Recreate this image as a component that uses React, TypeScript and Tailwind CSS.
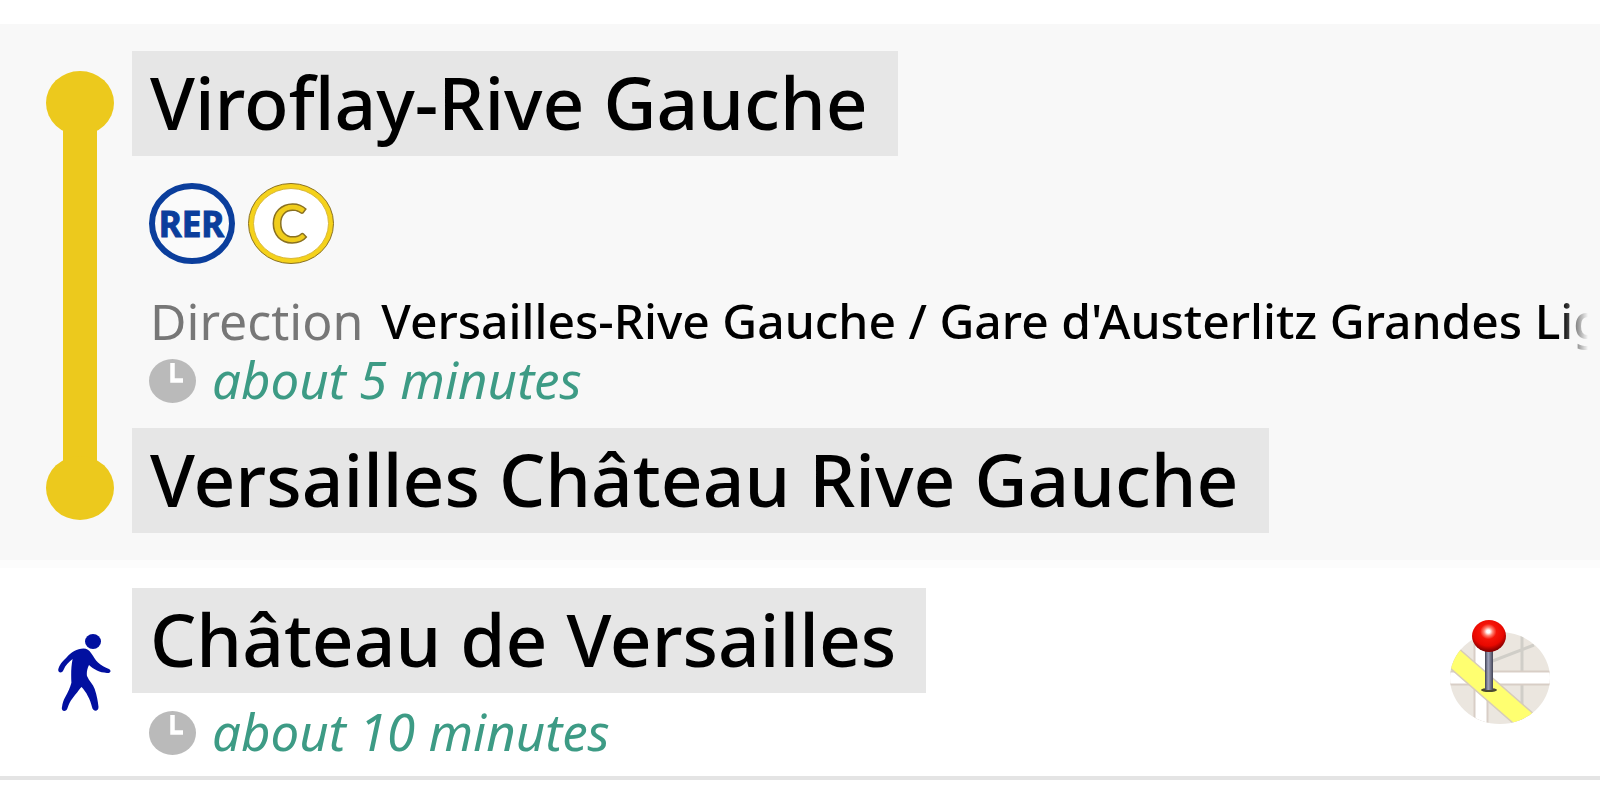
import type { ReactNode } from "react";

interface Leg { station: string; minutes: number; }

const ride: Leg & { direction: string; arrival: string } = {
  station: "Viroflay-Rive Gauche",
  direction: "Versailles-Rive Gauche / Gare d'Austerlitz Grandes Lignes",
  minutes: 5,
  arrival: "Versailles Château Rive Gauche",
};
const walk: Leg = { station: "Château de Versailles", minutes: 10 };

function StationName({ children }: { children: ReactNode }) {
  return <h2 className="w-fit whitespace-nowrap bg-[#e6e6e6] pb-1 pl-[18px] pr-[30px] text-[73px] leading-[101px] font-medium text-black">{children}</h2>;
}

function Duration({ minutes }: { minutes: number }) {
  return (
    <p className="flex items-center gap-4 pl-[17px] text-[51px] leading-[56px] italic text-[#3d9b85]">
      <svg viewBox="0 0 47 44" className="w-[47px] h-11 shrink-0" aria-hidden="true">
        <ellipse cx="23.5" cy="22" rx="23.5" ry="22" fill="#bababa" />
        <path d="M23.5 4V21.5H34" fill="none" stroke="#fff" strokeWidth="4.5" />
      </svg>
      <span className="pb-1">about {minutes} minutes</span>
    </p>
  );
}

function RerLogo() {
  return (
    <svg viewBox="0 0 86 81" className="w-[86px] h-[81px]" role="img" aria-label="RER">
      <ellipse cx="43" cy="40.5" rx="40" ry="37.5" fill="#fafafa" stroke="#0b3e9c" strokeWidth="6" />
      <text x="42.5" y="53.5" textAnchor="middle" fontFamily="'Noto Sans', sans-serif" fontWeight="700" fontSize="35" fill="#0b3e9c" stroke="#0b3e9c" strokeWidth="1">RER</text>
    </svg>
  );
}

function LineLogo() {
  return (
    <svg viewBox="0 0 86 81" className="w-[86px] h-[81px]" role="img" aria-label="C">
      <ellipse cx="43" cy="40.5" rx="42.5" ry="40" fill="#f5d21b" stroke="#8a7122" />
      <ellipse cx="43" cy="40.5" rx="37.5" ry="35" fill="#fff" stroke="#d9b83a" />
      <text x="41" y="60" textAnchor="middle" fontFamily="Lato, 'Noto Sans', sans-serif" fontWeight="700" fontSize="54" fill="#f0cd1c" stroke="#8a7122" strokeWidth="1.5">C</text>
    </svg>
  );
}

function Walker() {
  return (
    <svg viewBox="0 0 53 77" className="w-[53px] h-[77px]" fill="#0210a0" role="img" aria-label="Walk">
      <ellipse cx="35" cy="7.500" rx="8" ry="7.500" />
      <path d="M25.500 14.500C29 14.500 31 16 33 19C36 23 37 26 40 28.500C43 31.500 47 33.500 51 35C54 37 52 39.500 49 39C45 38.500 42 38 39 36.500C36 35 33 33 31 31C29 35 28.500 39 29 42C31 47 35 50 36.700 55C39 62 40 68 40.500 73C40.500 78 35 78 34 73C33 69 32 66 29.800 62C28 58 26 56 23.600 53C22 54 21 56 19.500 58C16 62 13 66 11.500 69C10 72 9.500 75 8.500 76C6 78 3 76.500 4 73C4.500 69 5.500 66 7.300 63C10 58 12 54 13.400 48.700C13 41 13 33 14.600 25C11 28 7.500 31 5.500 36C4 40 -1 39 .5 34.500C2.500 29 5 27 9 23C13 18.500 19 14.500 25.500 14.500Z" />
    </svg>
  );
}

function MapPin() {
  return (
    <svg viewBox="0 0 100 106" className="w-[100px] h-[106px]" aria-hidden="true">
      <defs>
        <clipPath id="disc"><ellipse cx="50" cy="58" rx="50" ry="46" /></clipPath>
        <radialGradient id="ball" cx="48%" cy="36%" r="60%">
          <stop offset="0" stopColor="#fff" />
          <stop offset=".08" stopColor="#fff" />
          <stop offset=".22" stopColor="#ff8070" />
          <stop offset=".4" stopColor="#f51408" />
          <stop offset=".75" stopColor="#e80800" />
          <stop offset="1" stopColor="#8c0000" />
        </radialGradient>
        <linearGradient id="needle">
          <stop offset="0" stopColor="#3e4050" />
          <stop offset=".4" stopColor="#a2a4bd" />
          <stop offset="1" stopColor="#424455" />
        </linearGradient>
      </defs>
      <g clipPath="url(#disc)">
        <rect width="100" height="106" fill="#ebe6df" />
        <path d="M72 0V106M40 42L84 25M10 34L24 46" fill="none" stroke="#d0cec8" strokeWidth="3" />
        <path d="M31 0V106M0 58H100" fill="none" stroke="#d8cec6" strokeWidth="15" />
        <path d="M31 0V106M0 58H100" fill="none" stroke="#fff" strokeWidth="11" />
        <path d="M-4 31L82 106" fill="none" stroke="#d7ccb9" strokeWidth="22" />
        <path d="M-4 31L82 106" fill="none" stroke="#ffff70" strokeWidth="19" />
      </g>
      <ellipse cx="39" cy="70" rx="8" ry="2" fill="#4b4a32" />
      <rect x="35" y="29" width="8" height="41" fill="url(#needle)" />
      <ellipse cx="39" cy="16" rx="17" ry="16" fill="url(#ball)" />
    </svg>
  );
}

export default function App() {
  return (
    <main className="overflow-hidden bg-white pt-6 font-['Noto_Sans','Open_Sans',sans-serif]">
      <section className="flex border-b-8 border-[#fcfcfc] bg-[#f8f8f8] py-[27px]">
        <div className="flex w-[132px] shrink-0 flex-col items-center pt-5 pb-[13px] pr-[18px] pl-[46px]">
          <div className="h-16 w-[68px] shrink-0 rounded-[50%] bg-[#ecc91d]" />
          <div className="-my-2 w-[34px] flex-1 bg-[#ecc91d]" />
          <div className="h-16 w-[68px] shrink-0 rounded-[50%] bg-[#ecc91d]" />
        </div>
        <div className="min-w-0 flex-1">
          <StationName>{ride.station}</StationName>
          <div className="flex gap-[13px] py-[27px] pl-[17px]"><RerLogo /><LineLogo /></div>
          <p className="mr-1 flex gap-[18px] whitespace-nowrap pl-[18px] leading-[60px]">
            <span className="text-[50px] text-[#777]">Direction</span>
            <span className="min-w-0 flex-1 overflow-hidden text-[48px] font-medium text-black [mask-image:linear-gradient(to_left,transparent_8px,black_34px)]">{ride.direction}</span>
          </p>
          <div className="pb-[17px]"><Duration minutes={ride.minutes} /></div>
          <StationName>{ride.arrival}</StationName>
        </div>
      </section>
      <section className="flex border-b-4 border-[#e4e4e4] pt-5 pb-[13px]">
        <div className="w-[132px] shrink-0 pt-[46px] pl-[58px]"><Walker /></div>
        <div className="flex-1">
          <StationName>{walk.station}</StationName>
          <div className="pt-[10px]"><Duration minutes={walk.minutes} /></div>
        </div>
        <button type="button" aria-label="Show on map" className="mr-[50px] mt-8 self-start"><MapPin /></button>
      </section>
    </main>
  );
}
